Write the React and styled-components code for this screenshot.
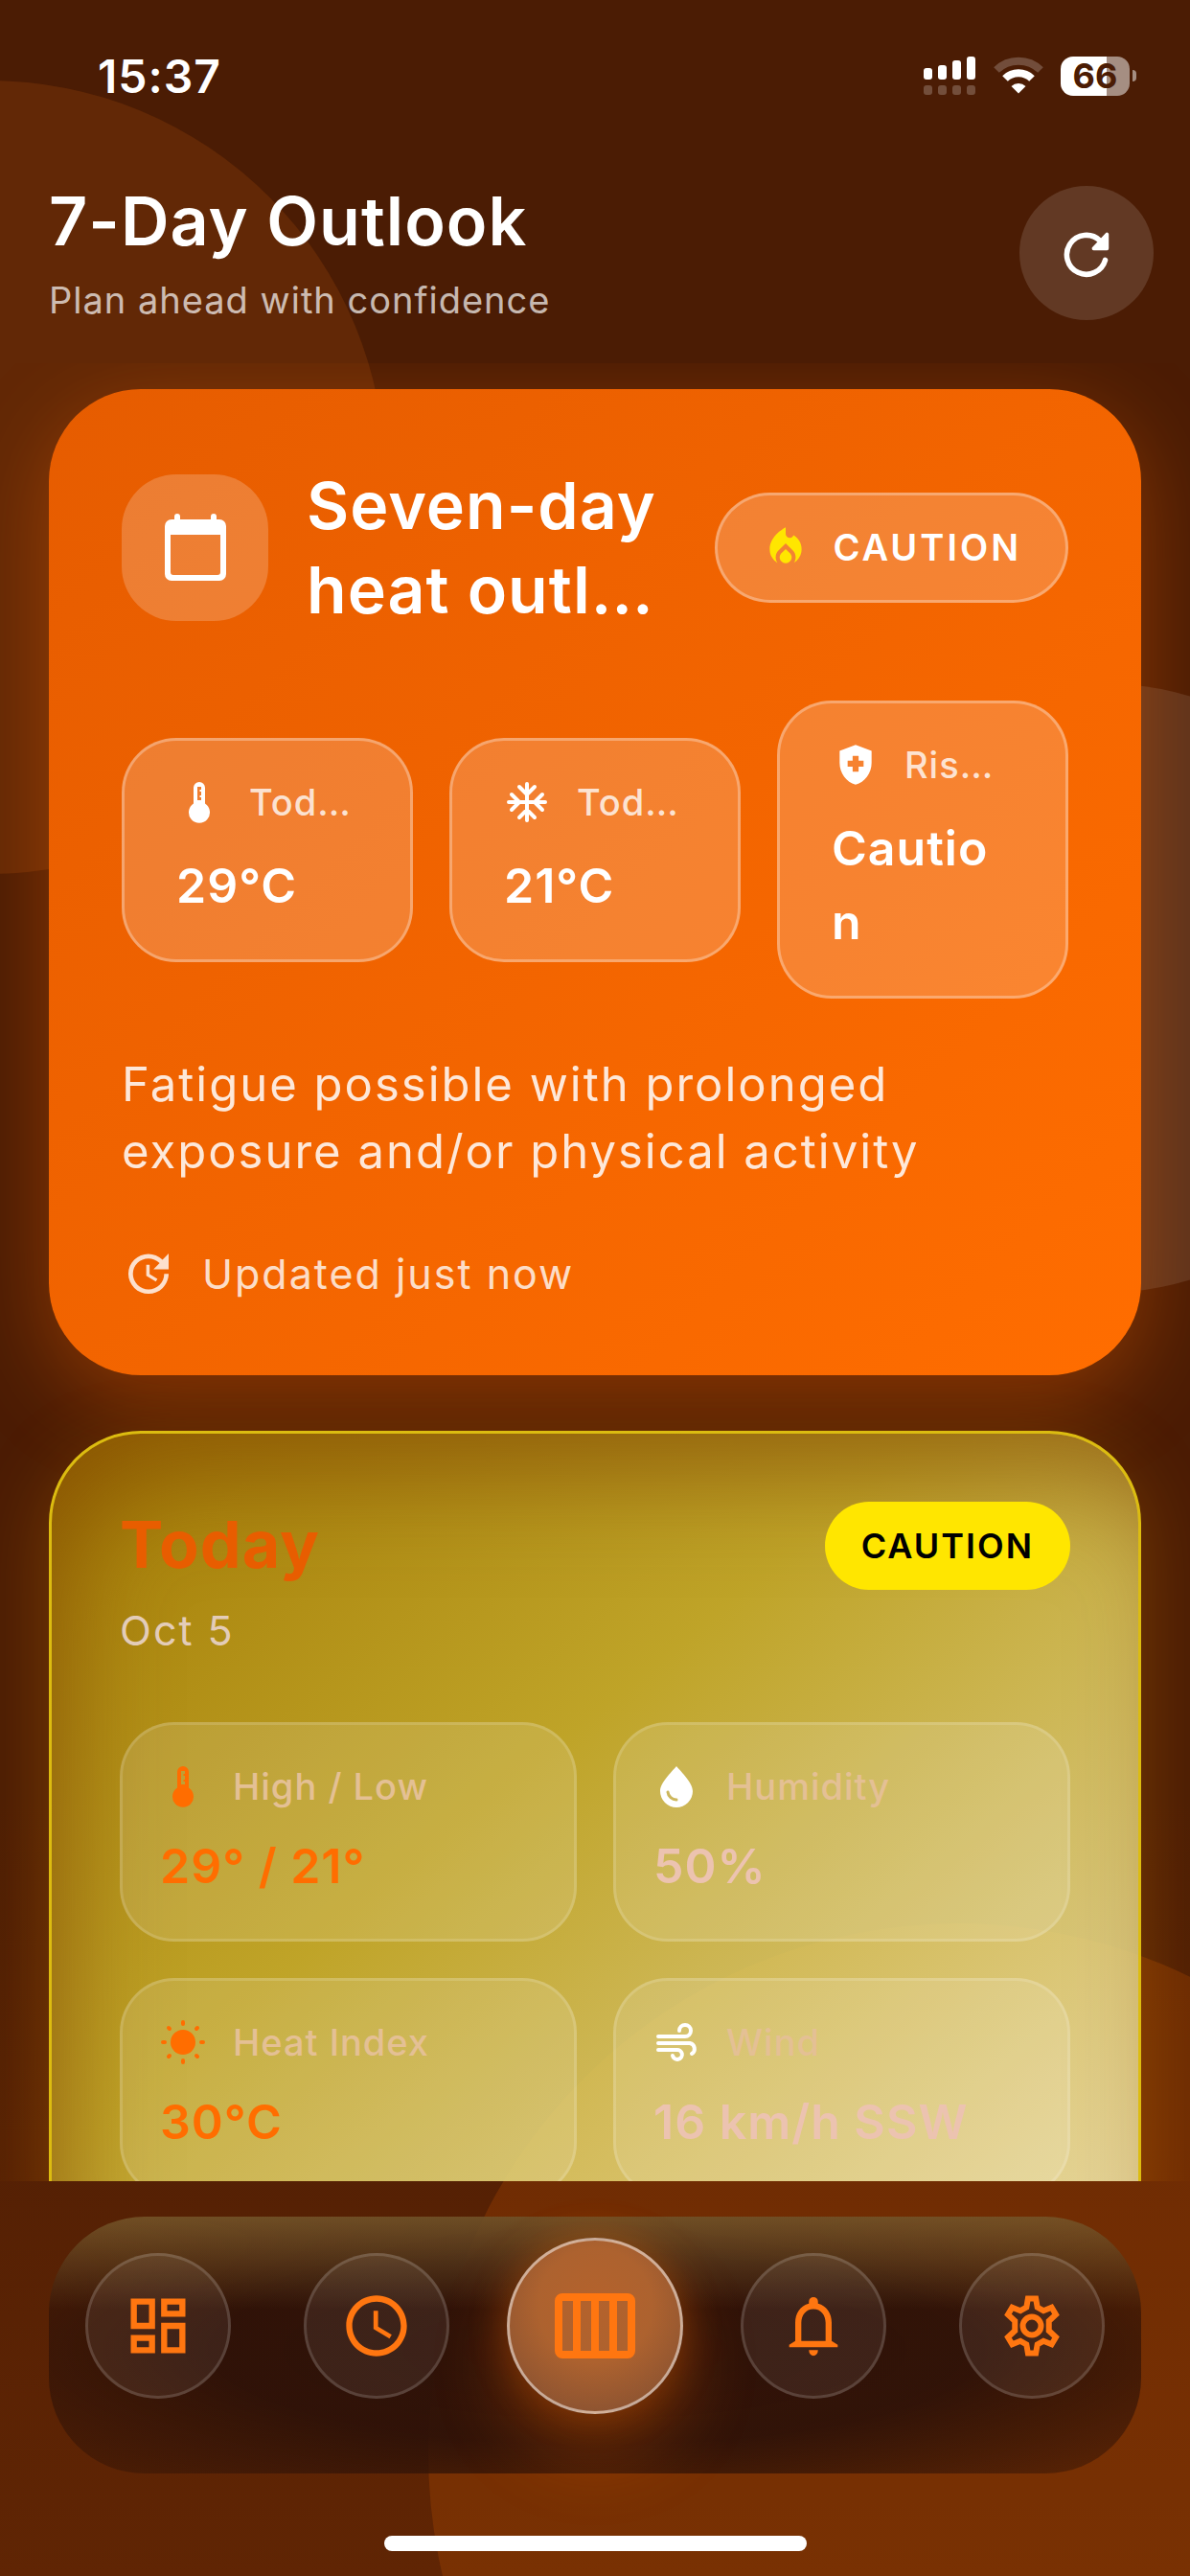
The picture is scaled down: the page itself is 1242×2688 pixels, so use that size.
import styled, { createGlobalStyle } from "styled-components";
import {
  MdAccessTime,
  MdHealthAndSafety,
  MdLocalFireDepartment,
  MdUpdate,
} from "react-icons/md";

function App() {
  return (
    <>
      <GlobalStyle />
      <Screen>
        <Backdrop aria-hidden="true">
          <Orb $x={-12} $y={498} $r={414} $color="rgba(255, 120, 20, 0.13)" />
          <Orb $x={1150} $y={1031} $r={318} $color="rgba(255, 255, 255, 0.1)" />
          <Orb $x={1000} $y={2560} $r={553} $color="rgba(255, 110, 0, 0.16)" />
        </Backdrop>

        <StatusBar>
          <Clock>15:37</Clock>
          <StatusIcons>
            <SignalIcon />
            <WifiIcon />
            <Battery>
              <BatteryLevel>66</BatteryLevel>
              <BatteryTip />
            </Battery>
          </StatusIcons>
        </StatusBar>

        <Header>
          <div>
            <Title>7-Day Outlook</Title>
            <Subtitle>Plan ahead with confidence</Subtitle>
          </div>
          <RefreshButton aria-label="Refresh">
            <RefreshIcon />
          </RefreshButton>
        </Header>

        <Content>
          <SummaryCard>
            <SummaryHead>
              <IconTile>
                <CalendarIcon />
              </IconTile>
              <SummaryTitle>Seven-day heat outl…</SummaryTitle>
              <RiskPill>
                <MdLocalFireDepartment size={50} color="#ffe600" />
                CAUTION
              </RiskPill>
            </SummaryHead>

            <StatRow>
              <Stat icon={<ThermometerIcon />} label="Tod…" value="29°C" />
              <Stat icon={<SnowflakeIcon />} label="Tod…" value="21°C" />
              <Stat
                icon={<MdHealthAndSafety size={50} />}
                label="Ris…"
                value="Caution"
              />
            </StatRow>

            <Advice>
              Fatigue possible with prolonged exposure and/or physical activity
            </Advice>
            <Updated>
              <MdUpdate size={56} />
              Updated just now
            </Updated>
          </SummaryCard>

          <DayCard>
            <DayHead>
              <div>
                <DayName>Today</DayName>
                <DayDate>Oct 5</DayDate>
              </div>
              <DayBadge>CAUTION</DayBadge>
            </DayHead>
            <MetricGrid>
              <Metric
                hot
                icon={<ThermometerIcon />}
                label="High / Low"
                value="29° / 21°"
              />
              <Metric icon={<DropIcon />} label="Humidity" value="50%" />
              <Metric hot icon={<SunIcon />} label="Heat Index" value="30°C" />
              <Metric icon={<WindIcon />} label="Wind" value="16 km/h SSW" />
            </MetricGrid>
          </DayCard>
        </Content>

        <Footer>
          <NavBar>
            <NavItem>
              <NavButton aria-label="Dashboard">
                <DashboardIcon />
              </NavButton>
            </NavItem>
            <NavItem>
              <NavButton aria-label="Hourly">
                <MdAccessTime size={76} />
              </NavButton>
            </NavItem>
            <NavItem>
              <NavButton aria-label="Week" aria-current="page" $active>
                <WeekIcon />
              </NavButton>
            </NavItem>
            <NavItem>
              <NavButton aria-label="Alerts">
                <BellIcon />
              </NavButton>
            </NavItem>
            <NavItem>
              <NavButton aria-label="Settings">
                <CogIcon />
              </NavButton>
            </NavItem>
          </NavBar>
          <HomeIndicator />
        </Footer>
      </Screen>
    </>
  );
}

export default App;

function Stat({ icon, label, value }) {
  return (
    <StatCard>
      <StatLabel>
        <IconSlot>{icon}</IconSlot>
        {label}
      </StatLabel>
      <StatValue>{value}</StatValue>
    </StatCard>
  );
}

function Metric({ icon, label, value, hot }) {
  return (
    <MetricCard>
      <MetricLabel $hot={hot}>
        <IconSlot>{icon}</IconSlot>
        <span>{label}</span>
      </MetricLabel>
      <MetricValue $hot={hot}>{value}</MetricValue>
    </MetricCard>
  );
}

/* Icons */

const SignalIcon = () => (
  <svg width="56" height="42" viewBox="0 0 56 42" fill="currentColor">
    <rect x="1" y="13" width="9" height="12" rx="3" />
    <rect x="16" y="10" width="9" height="15" rx="3" />
    <rect x="31" y="5" width="9" height="20" rx="3" />
    <rect x="46" y="1" width="9" height="24" rx="3" />
    <g opacity="0.22">
      <rect x="1" y="31" width="9" height="10" rx="3" />
      <rect x="16" y="31" width="9" height="10" rx="3" />
      <rect x="31" y="31" width="9" height="10" rx="3" />
      <rect x="46" y="31" width="9" height="10" rx="3" />
    </g>
  </svg>
);

const WifiIcon = () => (
  <svg width="52" height="40" viewBox="0 0 52 40" fill="none" stroke="currentColor">
    <path d="M3 14 A33 33 0 0 1 49 14" strokeWidth="8" opacity="0.22" />
    <path d="M12 23 A20 20 0 0 1 40 23" strokeWidth="8" />
    <path
      d="M18.500 31 A11 11 0 0 1 33.500 31 L26 38.500 Z"
      fill="currentColor"
      stroke="none"
    />
  </svg>
);

const RefreshIcon = () => (
  <svg width="52" height="52" viewBox="0 0 56 56" fill="none" stroke="currentColor">
    <path
      d="M49 36 A22 22 0 1 1 43 14"
      strokeWidth="6"
      strokeLinecap="round"
    />
    <path
      d="M51 7 V23 H36 Z"
      fill="currentColor"
      strokeWidth="4"
      strokeLinejoin="round"
    />
  </svg>
);

const CalendarIcon = () => (
  <svg width="64" height="72" viewBox="0 0 64 72" fill="currentColor">
    <rect x="10" y="1" width="6" height="14" rx="3" />
    <rect x="48" y="1" width="6" height="14" rx="3" />
    <path
      fillRule="evenodd"
      d="M7 7 H57 A7 7 0 0 1 64 14 V64 A7 7 0 0 1 57 71 H7 A7 7 0 0 1 0 64 V14 A7 7 0 0 1 7 7 Z M6 23 V62 A3 3 0 0 0 9 65 H55 A3 3 0 0 0 58 62 V23 Z"
    />
  </svg>
);

const ThermometerIcon = () => (
  <svg width="48" height="48" viewBox="0 0 48 48" fill="currentColor">
    <path
      fillRule="evenodd"
      d="M24 3 A6 6 0 0 1 30 9 V25.500 A11 11 0 1 1 18 25.500 V9 A6 6 0 0 1 24 3 Z M22 8 V22 H26 V19 H24.500 V17 H26 V13 H24.500 V11 H26 V8 Z"
    />
  </svg>
);

const SnowflakeIcon = () => (
  <svg
    width="48"
    height="48"
    viewBox="0 0 48 48"
    fill="none"
    stroke="currentColor"
    strokeWidth="4"
    strokeLinecap="round"
    strokeLinejoin="round"
  >
    <path d="M24 5 V43 M5 24 H43 M16 8 L24 16 L32 8 M16 40 L24 32 L32 40 M8 16 L16 24 L8 32 M40 16 L32 24 L40 32" />
  </svg>
);

const DropIcon = () => (
  <svg width="48" height="48" viewBox="0 0 48 48" fill="currentColor">
    <path d="M24 3 C19 9 7 20 7 29 A17 17 0 0 0 41 29 C41 20 29 9 24 3 Z" />
    <path
      d="M15 30 A9 9 0 0 0 24 38"
      fill="none"
      stroke="#cdb75c"
      strokeWidth="3"
      strokeLinecap="round"
    />
  </svg>
);

const SunIcon = () => (
  <svg width="48" height="48" viewBox="0 0 48 48" fill="currentColor">
    <circle cx="24" cy="24" r="13" />
    <path
      fill="none"
      stroke="currentColor"
      strokeWidth="4"
      strokeLinecap="round"
      d="M24 3 V5 M24 43 V45 M3 24 H5 M43 24 H45 M9 9 L10 10 M38 38 L39 39 M39 9 L38 10 M10 38 L9 39"
    />
  </svg>
);

const WindIcon = () => (
  <svg
    width="48"
    height="48"
    viewBox="0 0 48 48"
    fill="none"
    stroke="currentColor"
    strokeWidth="4"
    strokeLinecap="round"
  >
    <path d="M5 18 H33 A6 6 0 1 0 27 12" />
    <path d="M5 25 H38 A6 6 0 0 1 40 36" />
    <path d="M5 32 H24 A5 5 0 1 1 20 38" />
  </svg>
);

const DashboardIcon = () => (
  <svg width="76" height="76" viewBox="0 0 24 24" fill="currentColor">
    <path d="M19 5V7H15V5H19M9 5V11H5V5H9M19 13V19H15V13H19M9 17V19H5V17H9M21 3H13V9H21V3M11 3H3V13H11V3M21 11H13V21H21V11M11 15H3V21H11V15Z" />
  </svg>
);

const WeekIcon = () => (
  <svg width="84" height="68" viewBox="0 0 84 68" fill="currentColor">
    <path
      fillRule="evenodd"
      d="M8 0 H76 A8 8 0 0 1 84 8 V60 A8 8 0 0 1 76 68 H8 A8 8 0 0 1 0 60 V8 A8 8 0 0 1 8 0 Z M8 8 V60 H19 V8 Z M27 8 V60 H38 V8 Z M46 8 V60 H57 V8 Z M65 8 V60 H76 V8 Z"
    />
  </svg>
);

const BellIcon = () => (
  <svg width="76" height="76" viewBox="0 0 24 24" fill="currentColor">
    <path d="M10.500 20H13.500A1.500 1.900 0 0 1 10.500 20ZM18 17V11C18 7.930 16.360 5.360 13.500 4.680V4A1.500 1.500 0 0 0 10.500 4V4.680C7.630 5.360 6 7.920 6 11V17L4 18.200V19H20V18.200L18 17ZM16 17H8V11C8 8.520 9.510 6.500 12 6.500S16 8.520 16 11V17Z" />
  </svg>
);

const CogIcon = () => (
  <svg
    width="76"
    height="76"
    viewBox="0 0 24 24"
    fill="none"
    stroke="currentColor"
    strokeWidth="1.900"
  >
    <path d="M10.700 3H13.300L13.800 5.900L15.800 7L18.500 5.900L19.900 8.300L17.600 10.400V13.600L19.900 15.700L18.500 18.100L15.800 17L13.800 18.100L13.300 21H10.700L10.200 18.100L8.200 17L5.500 18.100L4.100 15.700L6.400 13.600V10.400L4.100 8.300L5.500 5.900L8.200 7L10.200 5.900Z" />
    <circle cx="12" cy="12" r="3" />
  </svg>
);

/* Styles */

const GlobalStyle = createGlobalStyle`
  *, *::before, *::after {
    box-sizing: border-box;
  }

  body {
    margin: 0;
    background: #4b1c04;
    color: #ffffff;
    font-family: Inter, "Liberation Sans", sans-serif;
    letter-spacing: 1px;
  }

  h1, h2, h3, p {
    margin: 0;
  }

  button {
    font: inherit;
    padding: 0;
    cursor: pointer;
  }

  svg {
    display: block;
    flex: none;
  }
`;

const Screen = styled.div`
  position: relative;
  display: flex;
  flex-direction: column;
  height: 100vh;
  overflow: hidden;
  background: linear-gradient(180deg, #4b1c04 0%, #4b1c04 70%, #602504 100%);
  isolation: isolate;
`;

const Backdrop = styled.div`
  position: absolute;
  inset: 0;
  z-index: -1;
  overflow: hidden;
`;

const Orb = styled.div`
  position: absolute;
  left: ${({ $x, $r }) => $x - $r}px;
  top: ${({ $y, $r }) => $y - $r}px;
  width: ${({ $r }) => $r * 2}px;
  height: ${({ $r }) => $r * 2}px;
  border-radius: 50%;
  background: ${({ $color }) => $color};
`;

const StatusBar = styled.div`
  display: flex;
  align-items: center;
  justify-content: space-between;
  height: 132px;
  padding: 26px 56px 0 102px;
`;

const Clock = styled.span`
  font-size: 48px;
  font-weight: 600;
`;

const StatusIcons = styled.div`
  display: flex;
  align-items: center;
  gap: 18px;
`;

const Battery = styled.div`
  display: flex;
  align-items: center;
  gap: 3px;
`;

const BatteryLevel = styled.span`
  width: 72px;
  border-radius: 13px;
  background: linear-gradient(
    90deg,
    #ffffff 66%,
    rgba(255, 255, 255, 0.5) 66%
  );
  color: #4b1c04;
  font-size: 36px;
  font-weight: 700;
  letter-spacing: 0;
  line-height: 41px;
  text-align: center;
`;

const BatteryTip = styled.span`
  width: 4px;
  height: 12px;
  border-radius: 0 4px 4px 0;
  background: rgba(255, 255, 255, 0.5);
`;

const Header = styled.header`
  display: flex;
  align-items: center;
  justify-content: space-between;
  height: 247px;
  padding: 17px 38px 0 51px;
`;

const Title = styled.h1`
  font-size: 70px;
  font-weight: 600;
  line-height: 88px;
`;

const Subtitle = styled.p`
  margin-top: 10px;
  color: rgba(255, 255, 255, 0.7);
  font-size: 38px;
  line-height: 56px;
`;

const RefreshButton = styled.button`
  display: grid;
  place-items: center;
  width: 140px;
  height: 140px;
  border: 0;
  border-radius: 50%;
  background: rgba(255, 255, 255, 0.13);
  color: #ffffff;
`;

const Content = styled.main`
  display: flex;
  flex: 1;
  flex-direction: column;
  gap: 58px;
  min-height: 0;
  padding: 27px 51px 0;
  overflow: hidden;

  & > * {
    flex: none;
  }
`;

const SummaryCard = styled.section`
  padding: 77px 76px 76px;
  border-radius: 96px;
  background: linear-gradient(135deg, #e65c00, #ff6d00);
  box-shadow: 0 24px 90px rgba(255, 109, 0, 0.36);
`;

const SummaryHead = styled.div`
  display: flex;
  align-items: center;
  gap: 40px;
  margin-bottom: 72px;
`;

const IconTile = styled.div`
  display: grid;
  flex: none;
  place-items: center;
  width: 153px;
  height: 153px;
  border-radius: 57px;
  background: rgba(255, 255, 255, 0.2);
`;

const SummaryTitle = styled.h2`
  flex: 1;
  font-size: 68px;
  font-weight: 600;
  line-height: 88px;
`;

const RiskPill = styled.span`
  display: flex;
  flex: none;
  align-items: center;
  gap: 24px;
  height: 115px;
  padding: 0 46px;
  border: 3px solid rgba(255, 255, 255, 0.3);
  border-radius: 58px;
  background: rgba(255, 255, 255, 0.2);
  font-size: 38px;
  font-weight: 600;
  letter-spacing: 3px;
`;

const StatRow = styled.div`
  display: grid;
  grid-template-columns: repeat(3, 1fr);
  align-items: center;
  gap: 38px;
`;

const StatCard = styled.div`
  padding: 38px 54px;
  border: 3px solid rgba(255, 255, 255, 0.3);
  border-radius: 57px;
  background: rgba(255, 255, 255, 0.19);
`;

const IconSlot = styled.span`
  display: grid;
  flex: none;
  place-items: center;
  width: 48px;
  height: 52px;
`;

const StatLabel = styled.div`
  display: flex;
  align-items: center;
  gap: 28px;
  margin-bottom: 23px;
  color: rgba(255, 255, 255, 0.8);
  font-size: 38px;
  font-weight: 500;
  line-height: 52px;

  svg {
    color: #ffffff;
  }
`;

const StatValue = styled.div`
  font-size: 50px;
  font-weight: 600;
  line-height: 77px;
  overflow-wrap: anywhere;
`;

const Advice = styled.p`
  margin-top: 55px;
  color: rgba(255, 255, 255, 0.85);
  font-size: 49px;
  letter-spacing: 2px;
  line-height: 70px;
`;

const Updated = styled.div`
  display: flex;
  align-items: center;
  gap: 28px;
  margin-top: 62px;
  color: rgba(255, 255, 255, 0.8);
  font-size: 43px;
  letter-spacing: 2px;
  line-height: 60px;
`;

const DayCard = styled.section`
  padding: 71px 71px 76px;
  border: 3px solid #dcbc10;
  border-radius: 96px;
  background: linear-gradient(
    140deg,
    rgba(178, 138, 4, 0.86) 0%,
    rgba(210, 186, 46, 0.86) 42%,
    rgba(246, 236, 180, 0.9) 100%
  );
  box-shadow:
    0 24px 80px rgba(255, 160, 0, 0.26),
    inset 30px 60px 110px -20px rgba(120, 60, 0, 0.6);
`;

const DayHead = styled.div`
  display: flex;
  align-items: flex-start;
  justify-content: space-between;
`;

const DayName = styled.h2`
  color: #e85d00;
  font-size: 68px;
  font-weight: 700;
  line-height: 88px;
`;

const DayDate = styled.p`
  margin-top: 16px;
  color: #e3ccb8;
  font-size: 43px;
  letter-spacing: 2px;
  line-height: 60px;
`;

const DayBadge = styled.span`
  padding: 0 38px;
  border-radius: 46px;
  background: #ffe600;
  color: #000000;
  font-size: 36px;
  font-weight: 600;
  letter-spacing: 2px;
  line-height: 92px;
`;

const MetricGrid = styled.div`
  display: grid;
  grid-template-columns: repeat(2, 1fr);
  gap: 38px;
  margin-top: 66px;
`;

const MetricCard = styled.div`
  padding: 38px 39px;
  border: 3px solid rgba(255, 255, 255, 0.14);
  border-radius: 57px;
  background: rgba(255, 255, 255, 0.13);
`;

const MetricLabel = styled.div`
  display: flex;
  align-items: center;
  gap: 28px;
  margin-bottom: 19px;
  color: #e4c094;
  font-size: 38px;
  font-weight: 500;
  line-height: 52px;

  svg {
    color: ${({ $hot }) => ($hot ? "#ff6d00" : "#ffffff")};
  }
`;

const MetricValue = styled.div`
  color: ${({ $hot }) => ($hot ? "#ff6d00" : "#ecc3b0")};
  font-size: 50px;
  font-weight: 600;
  line-height: 76px;
`;

const Footer = styled.footer`
  padding: 37px 51px 26px;
`;

const NavBar = styled.nav`
  display: flex;
  height: 268px;
  padding: 22px 0 62px;
  border-radius: 100px;
  background:
    linear-gradient(180deg, rgba(130, 100, 50, 0.7) 0%, transparent 36%),
    radial-gradient(
      ellipse at 50% 52%,
      #2e1208 0%,
      rgba(46, 18, 8, 0.95) 50%,
      rgba(60, 24, 6, 0.4) 100%
    );
`;

const NavItem = styled.div`
  display: flex;
  flex: 1;
  align-items: center;
  justify-content: center;
`;

const NavButton = styled.button`
  display: grid;
  place-items: center;
  width: ${({ $active }) => ($active ? 184 : 152)}px;
  height: ${({ $active }) => ($active ? 184 : 152)}px;
  border: 3px solid rgba(255, 255, 255, ${({ $active }) => ($active ? 0.5 : 0.14)});
  border-radius: 50%;
  background: ${({ $active }) =>
    $active
      ? "radial-gradient(circle at 50% 38%, #b4622c 0%, #ad622f 42%, #7c4c32 100%)"
      : "rgba(255, 255, 255, 0.07)"};
  box-shadow: ${({ $active }) =>
    $active
      ? "0 0 40px rgba(255, 109, 0, 0.3), 0 40px 70px 10px rgba(255, 109, 0, 0.24)"
      : "none"};
  color: #ff7610;
`;

const HomeIndicator = styled.div`
  width: 441px;
  height: 16px;
  margin: 65px auto 0;
  border-radius: 8px;
  background: #ffffff;
`;
